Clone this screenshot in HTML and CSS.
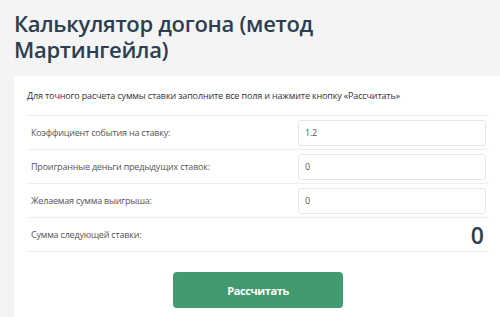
FILE: index.html
```html
<!DOCTYPE html>
<html>
<head>
    <title>Калькулятор догона</title>
    <link rel="stylesheet" href="styles.css">
</head>
<body>
    <h1 class="page-title">Калькулятор догона (метод Мартингейла)</h1>

    <form class="calc-card" id="martingale-form">
        <p class="calc-intro">Для точного расчета суммы ставки заполните все поля и нажмите кнопку «Рассчитать»</p>

        <div class="calc-row">
            <label for="coef">Коэффициент события на ставку:</label>
            <input type="text" id="coef" value="1.2">
        </div>

        <div class="calc-row">
            <label for="lost">Проигранные деньги предыдущих ставок:</label>
            <input type="text" id="lost" value="0">
        </div>

        <div class="calc-row">
            <label for="win">Желаемая сумма выигрыша:</label>
            <input type="text" id="win" value="0">
        </div>

        <div class="calc-row">
            <span class="calc-label">Сумма следующей ставки:</span>
            <span class="calc-result" id="result">0</span>
        </div>

        <button class="calc-button" id="calculate">Рассчитать</button>
    </form>
</body>
</html>
```

FILE: styles.css
```css
body {
  font-family: "Open Sans", Arial, sans-serif;
  margin: 0;
  padding: 0 0 0 14px;
  background-color: #f4f4f4;
  overflow: hidden;
}

.page-title {
  max-width: 420px;
  margin: 10px 0 14px;
  font-size: 22px;
  line-height: 26px;
  font-weight: 600;
  letter-spacing: -0.3px;
  color: #2c3e50;
}

.calc-card {
  width: 488px;
  box-sizing: border-box;
  padding: 13px 13px 20px;
  background-color: #fff;
  border-radius: 3px;
}

.calc-intro {
  margin: 0;
  padding-bottom: 12px;
  font-size: 9px;
  line-height: 14px;
  letter-spacing: -0.15px;
  color: #333;
  border-bottom: 1px solid #eee;
}

.calc-row {
  display: flex;
  align-items: center;
  justify-content: space-between;
  height: 33px;
  padding: 0 3px 0 4px;
  border-bottom: 1px solid #eee;
}

.calc-row label,
.calc-label {
  font-size: 9px;
  letter-spacing: -0.2px;
  color: #555;
}

.calc-row input {
  width: 188px;
  height: 26px;
  box-sizing: border-box;
  padding: 0 6px;
  font-family: inherit;
  font-size: 9px;
  letter-spacing: -0.2px;
  color: #555;
  border: 1px solid #e6e6e6;
  border-radius: 3px;
  outline: none;
}

.calc-result {
  padding-right: 2px;
  font-size: 23px;
  font-weight: 600;
  color: #2c3e50;
}

.calc-button {
  display: block;
  width: 170px;
  height: 36px;
  margin: 20px auto 0;
  background-color: #429a6f;
  border: none;
  border-radius: 4px;
  color: #fff;
  font-family: inherit;
  font-size: 11px;
  font-weight: 700;
  letter-spacing: -0.4px;
  cursor: pointer;
}
```
